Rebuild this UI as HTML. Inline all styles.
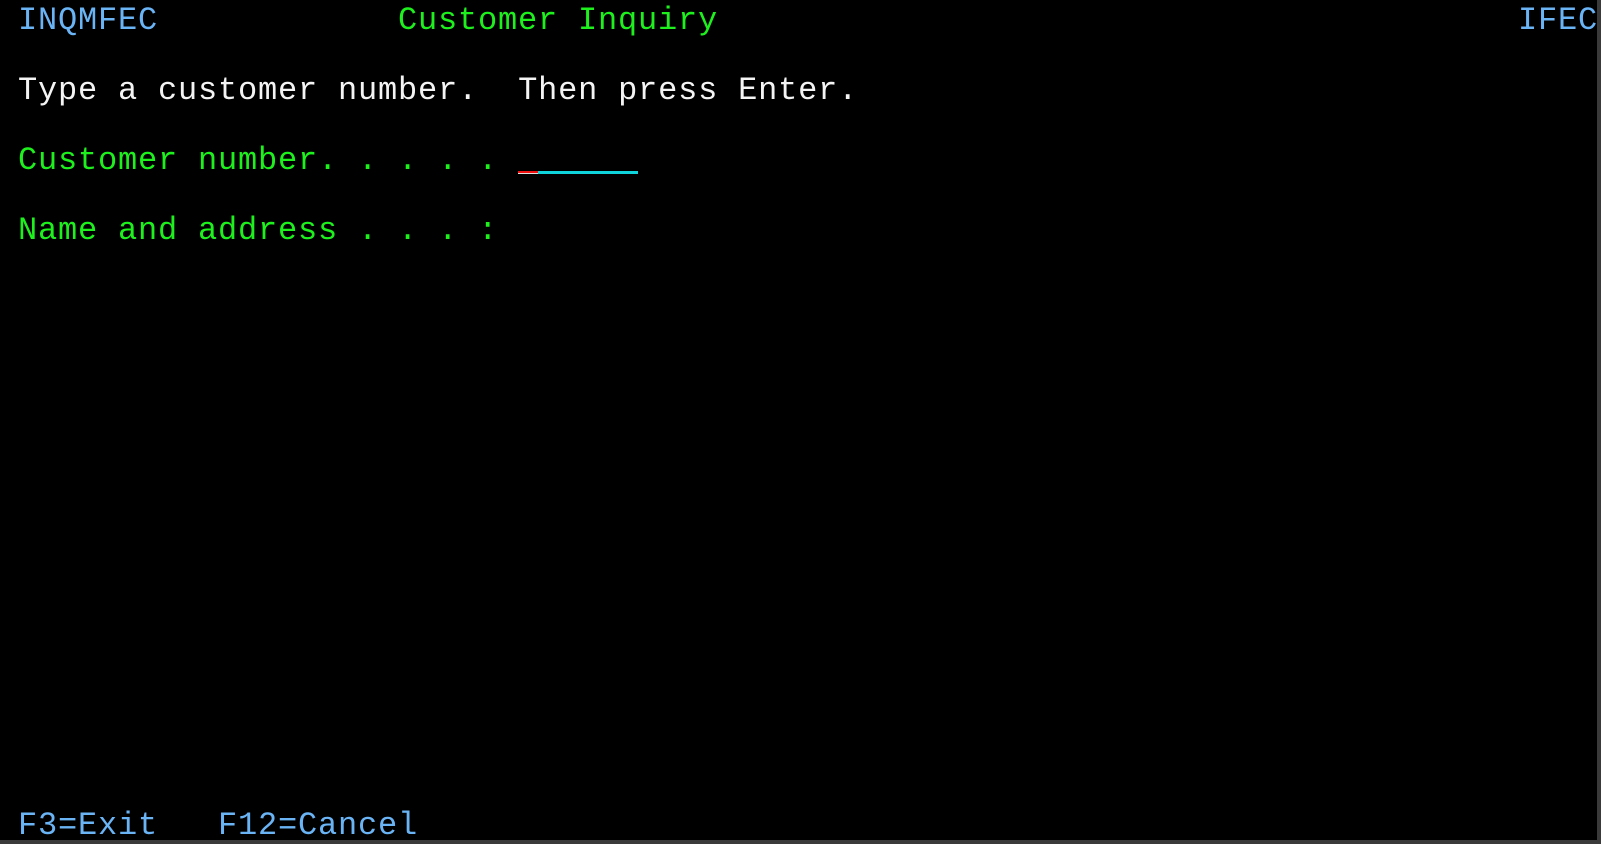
<!DOCTYPE html>
<html><head><meta charset="utf-8">
<style>
html,body{margin:0;padding:0;background:#3a3a3a;}
body{width:1601px;height:844px;position:relative;overflow:hidden;}
#scr{position:absolute;left:0;top:0;width:1597px;height:840px;background:#000;}
.r{position:absolute;white-space:pre;font-family:"Liberation Mono",monospace;font-size:32px;letter-spacing:0.8px;line-height:35px;height:35px;padding-top:3px;}
.b{color:#6ab4f5}.g{color:#1ef01e}.w{color:#f4f4f4}
</style></head><body>
<div id="scr">
<div class="r b" style="left:18px;top:0">INQMFEC</div>
<div class="r g" style="left:398px;top:0">Customer Inquiry</div>
<div class="r b" style="left:1518px;top:0">IFEC</div>
<div class="r w" style="left:18px;top:70px">Type a customer number.  Then press Enter.</div>
<div class="r g" style="left:18px;top:140px">Customer number. . . . .</div>
<div class="r g" style="left:18px;top:210px">Name and address . . . :</div>
<div class="r b" style="left:18px;top:805px">F3=Exit   F12=Cancel</div>
<div style="position:absolute;left:538px;top:171px;width:100px;height:3px;background:#10d4dc"></div>
<div style="position:absolute;left:518px;top:171px;width:20px;height:2px;background:#f01010"></div>
<div style="position:absolute;left:518px;top:173px;width:20px;height:1px;background:#e0e0e0"></div>
</div>
</body></html>
